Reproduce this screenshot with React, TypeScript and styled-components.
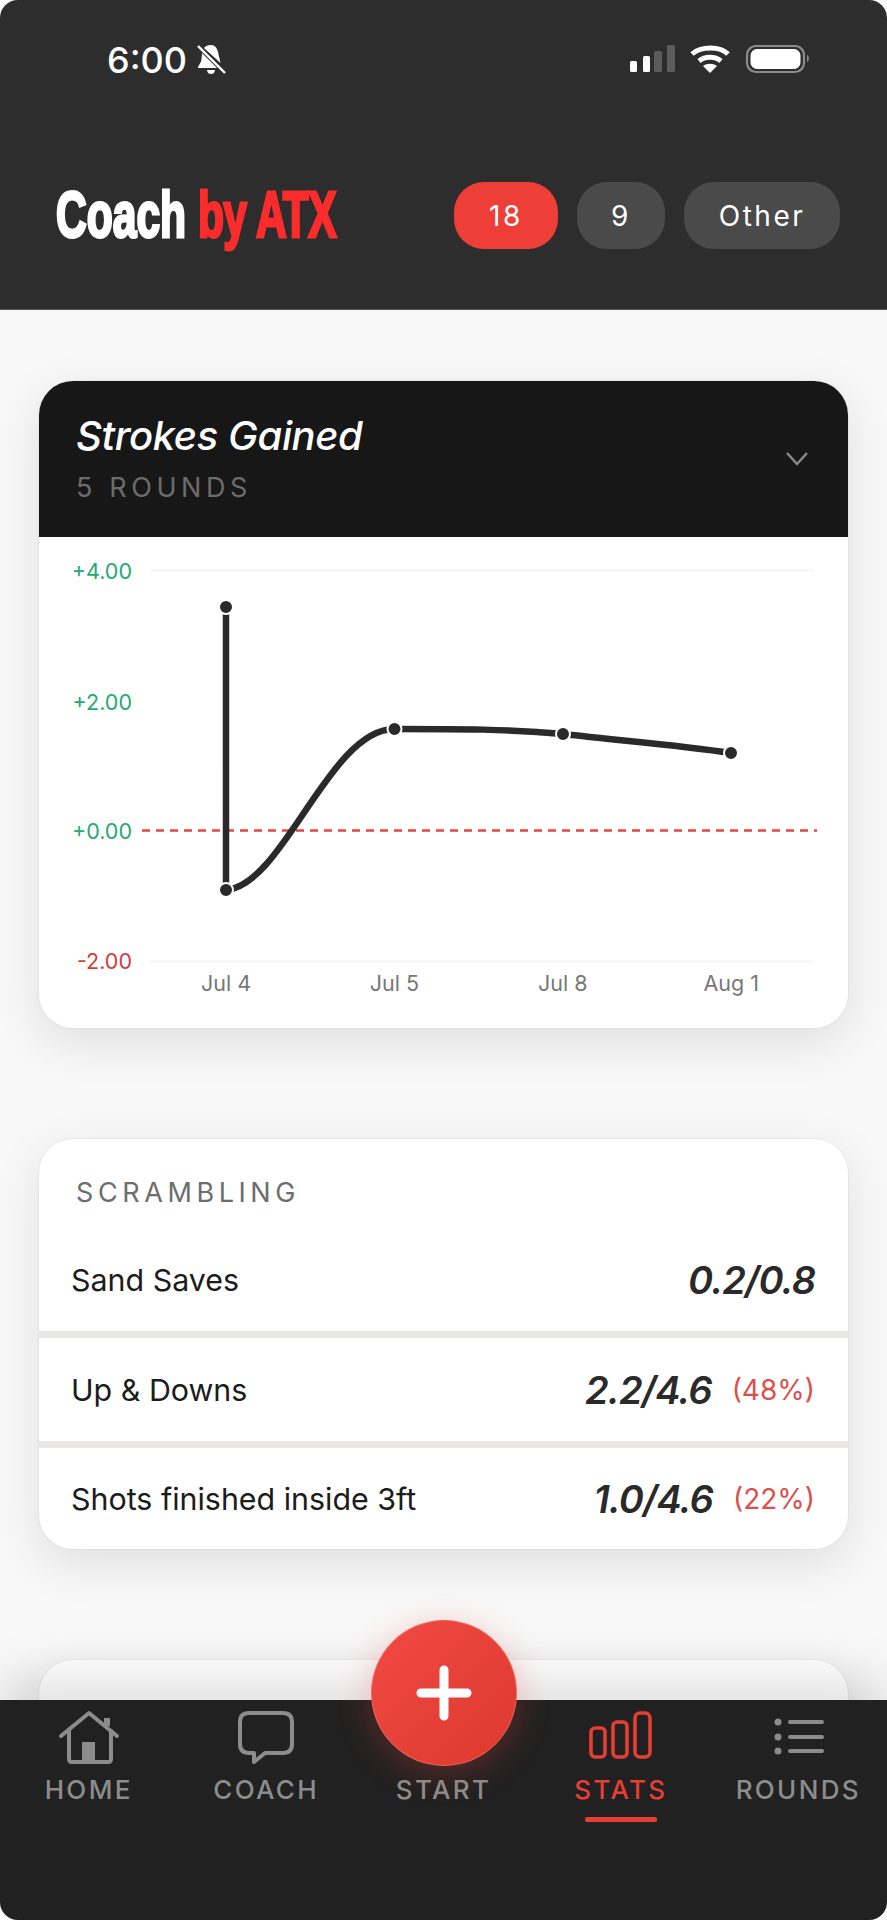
import React from "react";
import styled, { createGlobalStyle } from "styled-components";

const Global = createGlobalStyle`
  html, body { margin: 0; padding: 0; background: #fbfbfb; }
  * { box-sizing: border-box; }
  body { font-family: "Inter", "Liberation Sans", sans-serif; }
`;

const Screen = styled.div`
  position: relative;
  width: 887px;
  height: 1920px;
  display: flex;
  flex-direction: column;
  overflow: hidden;
  border-radius: 18px;
  background: #f8f8f8;
`;

const Header = styled.header`
  height: 310px;
  flex: none;
  background: #2d2d2d;
  padding: 44px 47px 0 56px;
  border-bottom: 1px solid #555;
`;

const StatusBar = styled.div`
  display: flex;
  align-items: center;
  justify-content: space-between;
  height: 32px;
  padding-left: 51px;
  padding-right: 30px;
`;

const StatusLeft = styled.div`
  display: flex;
  align-items: center;
  gap: 8px;
`;

const Clock = styled.span`
  font-size: 36px;
  font-weight: 500;
  color: #fff;
  line-height: 32px;
`;

const TitleRow = styled.div`
  display: flex;
  align-items: center;
  justify-content: space-between;
  margin-top: 106px;
`;

const Logo = styled.h1`
  margin: 0;
  width: 282px;
  font-family: "Liberation Sans Narrow", "Liberation Sans", sans-serif;
  font-size: 64px;
  line-height: 67px;
  font-weight: 700;
  color: #fff;
  -webkit-text-stroke: 3px currentColor;
  white-space: nowrap;
  transform: scaleX(0.665);
  transform-origin: left center;
`;

const LogoAccent = styled.span`
  color: #fb2c2c;
  letter-spacing: -0.015em;
`;

const Pills = styled.div`
  display: flex;
  gap: 19px;
`;

const Pill = styled.span<{ $active?: boolean; $w: number }>`
  width: ${(p) => p.$w}px;
  height: 67px;
  border-radius: 30px;
  display: flex;
  align-items: center;
  justify-content: center;
  font-size: 28px;
  font-weight: 400;
  letter-spacing: 0.09em;
  color: #fff;
  background: ${(p) => (p.$active ? "#ee3e38" : "#4a4a4a")};
`;

const Content = styled.main`
  flex: 1;
  min-height: 0;
  padding: 71px 39px 0;
  display: flex;
  flex-direction: column;
  gap: 111px;
  overflow: hidden;
`;

const Card = styled.section`
  flex: none;
  border-radius: 34px;
  background: #fff;
  box-shadow: 0 14px 48px rgba(0, 0, 0, 0.1), 0 0 0 1px rgba(0, 0, 0, 0.035);
  overflow: hidden;
`;

const ChartCard = styled(Card)`
  height: 647px;
`;

const ChartHead = styled.div`
  height: 156px;
  background: #171717;
  padding: 32px 37px 0;
  position: relative;
`;

const ChartTitle = styled.h2`
  margin: 0;
  font-size: 40px;
  line-height: 46px;
  font-weight: 500;
  font-style: italic;
  letter-spacing: -0.01em;
  color: #fff;
`;

const ChartSub = styled.div`
  margin-top: 13px;
  font-size: 27px;
  line-height: 32px;
  letter-spacing: 0.17em;
  color: #6c6c6c;
`;

const Chevron = styled.svg`
  position: absolute;
  right: 40px;
  top: 71px;
`;

const AxisText = styled.text<{ $tone: string; $size: number }>`
  font-family: "Inter", "Liberation Sans", sans-serif;
  font-size: ${(p) => p.$size}px;
  fill: ${(p) => p.$tone};
`;

const ListCard = styled(Card)`
  height: 410px;
  background: #e9e8e7;
  display: flex;
  flex-direction: column;
  gap: 7px;
`;

const ListHead = styled.div`
  padding: 38px 37px 0;
  height: 90px;
  font-size: 27px;
  line-height: 32px;
  letter-spacing: 0.17em;
  color: #6d6d6d;
`;

const Top = styled.div`
  background: #fff;
`;

const Row = styled.div<{ $h: number }>`
  height: ${(p) => p.$h}px;
  flex: none;
  background: #fff;
  padding: 0 33px 0 32px;
  display: flex;
  align-items: center;
`;

const RowLabel = styled.span`
  flex: 1;
  font-size: 30.4px;
  color: #1c1c1c;
`;

const RowValue = styled.span`
  font-size: 38px;
  font-weight: 600;
  font-style: italic;
  letter-spacing: -0.025em;
  color: #2a2a2a;
`;

const RowPct = styled.span`
  margin-left: 20px;
  font-size: 28px;
  color: #dc4f4a;
`;

const Stub = styled(Card)`
  height: 120px;
`;

const Nav = styled.nav`
  position: relative;
  z-index: 2;
  height: 220px;
  flex: none;
  background: #212121;
  box-shadow: 0 -18px 50px rgba(0, 0, 0, 0.13);
  display: grid;
  grid-template-columns: repeat(5, 1fr);
`;

const NavItem = styled.div<{ $on?: boolean }>`
  position: relative;
  display: flex;
  flex-direction: column;
  align-items: center;
  padding-top: 10px;
  color: ${(p) => (p.$on ? "#e53e35" : "#8c8c8c")};
`;

const IconSlot = styled.div`
  height: 64px;
`;

const NavLabel = styled.span`
  font-size: 26px;
  line-height: 32px;
  font-weight: 500;
  letter-spacing: 0.09em;
`;

const Underline = styled.span`
  position: absolute;
  top: 117px;
  left: 50%;
  width: 72px;
  height: 5px;
  margin-left: -36px;
  border-radius: 2px;
  background: #e53e35;
`;

const Fab = styled.button`
  position: absolute;
  z-index: 3;
  left: 371px;
  top: 1620px;
  width: 146px;
  height: 146px;
  border: 1px solid rgba(255, 255, 255, 0.18);
  border-radius: 50%;
  padding: 0;
  display: flex;
  align-items: center;
  justify-content: center;
  background: linear-gradient(135deg, #f14a43, #dc392e);
  box-shadow: 0 6px 34px rgba(238, 62, 56, 0.3);
`;

const points: [number, number][] = [
  [187, 70],
  [187, 353],
  [355.5, 192],
  [524, 197],
  [692, 216],
];

const IconHome = () => (
  <svg width="66" height="56" viewBox="0 0 66 56" fill="none" stroke="currentColor" strokeWidth="4" strokeLinecap="round" strokeLinejoin="round">
    <path d="M5 26 L33 3 L61 26" />
    <path d="M13 21 V49 Q13 52 16 52 H52 Q55 52 55 49 V21" />
    <path d="M51 16 V8" strokeWidth="6" strokeLinecap="butt" />
    <rect x="26" y="32" width="13" height="19" fill="currentColor" stroke="none" />
  </svg>
);

const IconChat = () => (
  <svg width="60" height="56" viewBox="0 0 60 56" fill="none" stroke="currentColor" strokeWidth="4" strokeLinejoin="round">
    <path d="M13 3 H47 Q56 3 56 12 V34 Q56 43 47 43 H29 L18 52 V43 H13 Q4 43 4 34 V12 Q4 3 13 3 Z" />
  </svg>
);

const IconBars = () => (
  <svg width="66" height="56" viewBox="0 0 66 56" fill="none" stroke="currentColor" strokeWidth="3.6">
    <rect x="3" y="18" width="14" height="29" rx="4" />
    <rect x="25" y="12" width="14" height="35" rx="4" />
    <rect x="47" y="3" width="15" height="44" rx="5" />
  </svg>
);

const IconList = () => (
  <svg width="66" height="56" viewBox="0 0 66 56" fill="currentColor">
    <circle cx="13" cy="12" r="3.5" />
    <circle cx="13" cy="27" r="3.5" />
    <circle cx="13" cy="41" r="3.5" />
    <rect x="23" y="10" width="36" height="4" rx="2" />
    <rect x="23" y="25" width="36" height="4" rx="2" />
    <rect x="23" y="39" width="36" height="4" rx="2" />
  </svg>
);

const BellOff = () => (
  <svg width="32" height="32" viewBox="0 0 32 32">
    <path d="M16 1 C20 1 22 4 23 8 L25.5 19 L9 4 C10.5 2 13 1 16 1 Z M7 9 L22 24 H3 C3 21 6 20 6.5 15 Z M12 26 H20 C19.5 29 18 30 16 30 C14 30 12.5 29 12 26 Z" fill="#fff" />
    <path d="M3 2 L30 29" stroke="#fff" strokeWidth="2.4" />
  </svg>
);

const StatusIcons = () => (
  <svg width="180" height="30" viewBox="0 0 180 30">
    <rect x="0" y="16" width="7" height="11" rx="1.5" fill="#fff" />
    <rect x="13" y="11" width="7" height="16" rx="1.5" fill="#fff" />
    <rect x="24" y="6" width="8" height="21" rx="1.5" fill="#5c5c5c" />
    <rect x="37" y="0" width="8" height="27" rx="1.5" fill="#5c5c5c" />
    <g fill="none" stroke="#fff" strokeWidth="5">
      <path d="M62 9 C71 1 90 1 98 9" />
      <path d="M69 16 C75 11 85 11 91 16" />
    </g>
    <path d="M73 21 C77 18 83 18 87 21 L80 28 Z" fill="#fff" />
    <rect x="117" y="1" width="57" height="26" rx="9" fill="none" stroke="#8b8b8b" strokeWidth="2.2" />
    <rect x="120.5" y="4" width="50" height="20" rx="6.5" fill="#fff" />
    <path d="M177 10 C179.5 11 179.5 16 177 17 Z" fill="#8b8b8b" />
  </svg>
);

const App = () => (
  <>
    <Global />
    <Screen>
      <Header>
        <StatusBar>
          <StatusLeft>
            <Clock>6:00</Clock>
            <BellOff />
          </StatusLeft>
          <StatusIcons />
        </StatusBar>
        <TitleRow>
          <Logo>
            Coach <LogoAccent>by ATX</LogoAccent>
          </Logo>
          <Pills>
            <Pill $active $w={104}>18</Pill>
            <Pill $w={88}>9</Pill>
            <Pill $w={156}>Other</Pill>
          </Pills>
        </TitleRow>
      </Header>

      <Content>
        <ChartCard>
          <ChartHead>
            <ChartTitle>Strokes Gained</ChartTitle>
            <ChartSub>5 ROUNDS</ChartSub>
            <Chevron width="22" height="14" viewBox="0 0 22 14" fill="none" stroke="#8a8a8a" strokeWidth="2.4">
              <path d="M1 1 L11 12 L21 1" />
            </Chevron>
          </ChartHead>
          <svg width="809" height="491" viewBox="0 0 809 491">
            <path d="M110 33.5 H775 M110 424.5 H775" stroke="#f4f4f4" strokeWidth="1.5" />
            <path d="M103 293.5 H778" stroke="#df4a45" strokeWidth="2.4" strokeDasharray="8 6" />
            <AxisText $size={21.5} $tone="#27a974" x="93" y="42" textAnchor="end">+4.00</AxisText>
            <AxisText $size={21.5} $tone="#27a974" x="93" y="173" textAnchor="end">+2.00</AxisText>
            <AxisText $size={21.5} $tone="#27a974" x="93" y="302" textAnchor="end">+0.00</AxisText>
            <AxisText $size={21.5} $tone="#d23c3c" x="93" y="432" textAnchor="end">-2.00</AxisText>
            {["Jul 4", "Jul 5", "Jul 8", "Aug 1"].map((d, i) => (
              <AxisText key={d} $size={21.5} $tone="#777" x={187 + i * 168.4} y="454" textAnchor="middle">{d}</AxisText>
            ))}
            <path
              d="M187 70 V353 C245 348 290 192 355.5 192 C420 192 470 192 524 197 C585 204 640 208 692 216"
              fill="none"
              stroke="#2a2a2a"
              strokeWidth="6.5"
            />
            {points.map(([x, y]) => (
              <circle key={`${x}-${y}`} cx={x} cy={y} r="7" fill="#2a2a2a" stroke="#fff" strokeWidth="2" />
            ))}
          </svg>
        </ChartCard>

        <ListCard>
          <Top>
            <ListHead>SCRAMBLING</ListHead>
            <Row $h={102}>
              <RowLabel>Sand Saves</RowLabel>
              <RowValue>0.2/0.8</RowValue>
            </Row>
          </Top>
          <Row $h={103}>
            <RowLabel>Up &amp; Downs</RowLabel>
            <RowValue>2.2/4.6</RowValue>
            <RowPct>(48%)</RowPct>
          </Row>
          <Row $h={101}>
            <RowLabel>Shots finished inside 3ft</RowLabel>
            <RowValue>1.0/4.6</RowValue>
            <RowPct>(22%)</RowPct>
          </Row>
        </ListCard>

        <Stub />
      </Content>

      <Nav>
        <NavItem>
          <IconSlot><IconHome /></IconSlot>
          <NavLabel>HOME</NavLabel>
        </NavItem>
        <NavItem>
          <IconSlot><IconChat /></IconSlot>
          <NavLabel>COACH</NavLabel>
        </NavItem>
        <NavItem>
          <IconSlot />
          <NavLabel>START</NavLabel>
        </NavItem>
        <NavItem $on>
          <IconSlot><IconBars /></IconSlot>
          <NavLabel>STATS</NavLabel>
          <Underline />
        </NavItem>
        <NavItem>
          <IconSlot><IconList /></IconSlot>
          <NavLabel>ROUNDS</NavLabel>
        </NavItem>
      </Nav>

      <Fab aria-label="Start">
        <svg width="56" height="56" viewBox="0 0 56 56" stroke="#fff" strokeWidth="9" strokeLinecap="round">
          <path d="M28 5 V51 M5 28 H51" />
        </svg>
      </Fab>
    </Screen>
  </>
);

export default App;
